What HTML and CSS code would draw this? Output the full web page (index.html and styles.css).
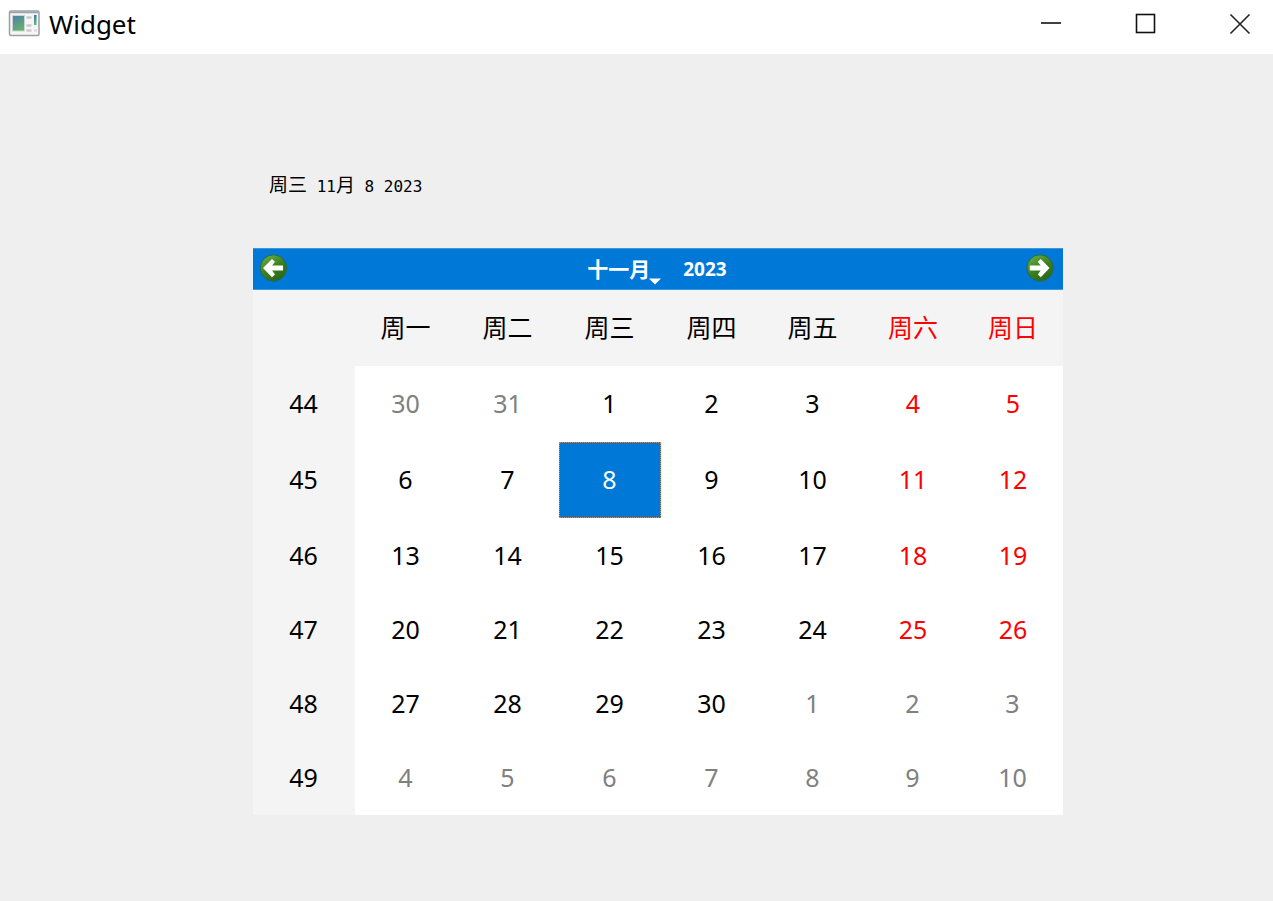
FILE: index.html
```html
<!DOCTYPE html>
<html lang="zh-CN">
<head>
<meta charset="utf-8">
<meta name="viewport" content="width=device-width, initial-scale=1">
<title>Widget</title>
<link rel="stylesheet" href="styles.css">
</head>
<body>
<header class="titlebar">
  <svg class="app-icon" width="32" height="28" viewBox="0 0 32 28" aria-hidden="true">
    <defs>
      <linearGradient id="pane" x1="0" y1="0" x2="0.4" y2="1"><stop offset="0" stop-color="#4b7fae"/><stop offset="1" stop-color="#63b06c"/></linearGradient>
      <linearGradient id="bar" x1="0" y1="0" x2="0" y2="1"><stop offset="0" stop-color="#3d74b8"/><stop offset="1" stop-color="#5fc07b"/></linearGradient>
    </defs>
    <rect x="1.500" y="1" width="29.500" height="24.500" rx="1.500" fill="#f6f6f6" stroke="#9c9fa3" stroke-width="1.500"/>
    <path d="M2 2.500h28" stroke="#9ba3b0" stroke-width="1.500"/>
    <rect x="4.500" y="5.500" width="12" height="15.500" fill="url(#pane)" stroke="#c9d3d8"/>
    <path d="M18.500 7.500h5M18.500 15.500h5M18.500 20.500h5" stroke="#c9c9c9" stroke-width="2.500"/>
    <path d="M26 20.500h3" stroke="#dedede" stroke-width="2.500"/>
    <rect x="26" y="5" width="2.500" height="10" fill="url(#bar)"/>
  </svg>
  <h1 class="title">Widget</h1>
  <div class="window-buttons">
    <button class="window-button" type="button" aria-label="最小化"><svg width="22" height="22" viewBox="0 0 22 22"><path d="M1 10h20" stroke="#111" stroke-width="1.600"/></svg></button>
    <button class="window-button" type="button" aria-label="最大化"><svg width="22" height="22" viewBox="0 0 22 22"><rect x="1.500" y="1.500" width="18" height="18" fill="none" stroke="#111" stroke-width="1.600"/></svg></button>
    <button class="window-button" type="button" aria-label="关闭"><svg width="22" height="22" viewBox="0 0 22 22"><path d="M1.500 1.500l19 19M20.500 1.500l-19 19" stroke="#222" stroke-width="1.600"/></svg></button>
  </div>
</header>
<main class="content">
  <p class="date"><span class="han">周三</span> 11<span class="han">月</span> 8 2023</p>
  <section class="calendar" aria-label="日历">
    <div class="navigation">
      <button class="arrow" type="button" aria-label="上个月">
        <svg width="28" height="28" viewBox="0 0 28 28">
          <defs><linearGradient id="green" x1="0.2" y1="0" x2="0.8" y2="1"><stop offset="0" stop-color="#68ad3f"/><stop offset="0.5" stop-color="#398120"/><stop offset="1" stop-color="#286516"/></linearGradient></defs>
          <circle cx="13.500" cy="14" r="13.200" fill="url(#green)" stroke="#286850" stroke-width="1"/>
          <path d="M3 14L12 5L15 7.800L12.100 11.600H23V16.600H12.100L15 20.400L12 23.200Z" fill="#fff"/>
        </svg>
      </button>
      <div class="period">
        <button class="month" type="button">十一月<svg class="caret" width="12" height="7" viewBox="0 0 12 7"><path d="M0 0.500h12L6 6.500z" fill="#fff"/></svg></button>
        <button class="year" type="button">2023</button>
      </div>
      <button class="arrow" type="button" aria-label="下个月">
        <svg width="28" height="28" viewBox="0 0 28 28">
          <circle cx="14" cy="14" r="13.200" fill="url(#green)" stroke="#286850" stroke-width="1"/>
          <path d="M23.500 14L14.800 5L11.800 7.800L14.700 11.600H3.800V16.600H14.700L11.800 20.400L14.800 23.200Z" fill="#fff"/>
        </svg>
      </button>
    </div>
    <table class="days">
      <colgroup><col class="wide" span="5"><col class="narrow" span="3"></colgroup>
      <thead>
        <tr><td class="corner"></td><th scope="col">周一</th><th scope="col">周二</th><th scope="col">周三</th><th scope="col">周四</th><th scope="col">周五</th><th scope="col" class="weekend">周六</th><th scope="col" class="weekend">周日</th></tr>
      </thead>
      <tbody>
        <tr class="tall"><th scope="row">44</th><td class="other">30</td><td class="other">31</td><td>1</td><td>2</td><td>3</td><td class="weekend">4</td><td class="weekend">5</td></tr>
        <tr class="tall"><th scope="row">45</th><td>6</td><td>7</td><td class="selected" aria-current="date">8</td><td>9</td><td>10</td><td class="weekend">11</td><td class="weekend">12</td></tr>
        <tr class="medium"><th scope="row">46</th><td>13</td><td>14</td><td>15</td><td>16</td><td>17</td><td class="weekend">18</td><td class="weekend">19</td></tr>
        <tr><th scope="row">47</th><td>20</td><td>21</td><td>22</td><td>23</td><td>24</td><td class="weekend">25</td><td class="weekend">26</td></tr>
        <tr><th scope="row">48</th><td>27</td><td>28</td><td>29</td><td>30</td><td class="other">1</td><td class="other">2</td><td class="other">3</td></tr>
        <tr><th scope="row">49</th><td class="other">4</td><td class="other">5</td><td class="other">6</td><td class="other">7</td><td class="other">8</td><td class="other">9</td><td class="other">10</td></tr>
      </tbody>
    </table>
  </section>
</main>
</body>
</html>
```
FILE: styles.css
```css
* {
  box-sizing: border-box;
}

body {
  margin: 0;
  min-height: 100vh;
  background: #efefef;
  color: #000;
  font-family: "Noto Sans", "Noto Sans CJK SC", sans-serif;
}

button {
  margin: 0;
  padding: 0;
  border: 0;
  background: none;
  color: inherit;
  font: inherit;
}

svg {
  display: block;
}

.titlebar {
  display: flex;
  align-items: flex-start;
  height: 54px;
  padding-left: 8px;
  overflow: hidden;
  background: #fff;
}

.app-icon {
  margin-top: 10px;
}

.title {
  margin: 8px 0 0 9px;
  font-size: 26px;
  font-weight: 400;
  line-height: 32px;
}

.window-buttons {
  display: flex;
  margin-left: auto;
}

.window-button {
  display: flex;
  align-items: center;
  justify-content: center;
  width: 95px;
  height: 48px;
}

.window-button:last-child {
  width: 94px;
  margin-right: -14px;
}

.content {
  padding: 118px 210px 86px 253px;
}

.date {
  margin: 0 0 46px;
  padding-left: 16px;
  font-family: "DejaVu Sans Mono", monospace;
  font-size: 16px;
  line-height: 30px;
}

.han {
  font-family: "Noto Sans CJK SC", sans-serif;
  font-size: 19px;
  line-height: 20px;
}

.navigation {
  display: flex;
  align-items: center;
  height: 42px;
  padding: 0 9px 2px 7px;
  border: 1px solid #3c97df;
  border-width: 1px 0;
  background: #0078d7;
  color: #fff;
}

.period {
  display: flex;
  flex: 1;
  justify-content: center;
  gap: 22px;
  padding-top: 2px;
  font-size: 19px;
  font-weight: 700;
  line-height: 28px;
}

.month {
  display: flex;
  align-items: flex-end;
  font-size: 21px;
}

.caret {
  margin: 0 0 -2px -1px;
}

.days {
  width: 100%;
  border-collapse: collapse;
  table-layout: fixed;
  background: #fff;
  font-size: 25px;
  line-height: 32px;
  text-align: center;
}

.wide {
  width: 102px;
}

.narrow {
  width: 100px;
}

.days th,
.days td {
  height: 74px;
  padding: 0 1px 2px 0;
  font-weight: 400;
}

.days th,
.days .corner {
  background: #f4f4f4;
}

.days thead th,
.days thead td,
.days .tall th,
.days .tall td {
  height: 76px;
}

.days .medium th,
.days .medium td {
  height: 75px;
}

.days .weekend {
  padding-right: 0;
  color: #f00;
}

.days .other {
  color: #808080;
}

.days .selected {
  outline: 1px dotted #e08a48;
  outline-offset: -1px;
  background: #0078d7;
  color: #fff;
}
```
